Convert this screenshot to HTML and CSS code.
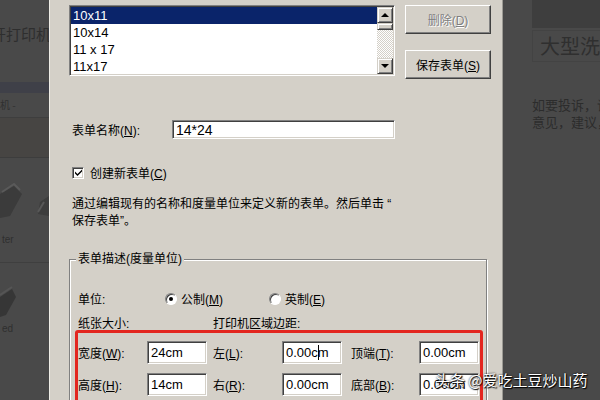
FILE: index.html
```html
<!DOCTYPE html>
<html lang="zh-CN">
<head>
<meta charset="utf-8">
<title>表单</title>
<link rel="stylesheet" href="styles.css">
</head>
<body>
<div class="screen">
  <aside class="bg-left">
    <div class="lt-title">开打印机</div>
    <div class="lt-band"></div>
    <div class="lt-row">机 -</div>
    <div class="lt-block"></div>
    <div class="lt-card">
      <svg class="lt-shape" width="49" height="60" viewBox="0 0 49 60">
        <path d="M0 22 L14 14 L22 22 L10 44 L0 46 Z" fill="#3b3b3b"/>
        <path d="M2 20 L14 12 L20 18" fill="none" stroke="#5a5a5a" stroke-width="2"/>
        <path d="M40 30 L49 24 L49 44 L38 42 Z" fill="#3d3d3d"/>
        <path d="M38 40 L44 30" stroke="#585858" stroke-width="2"/>
      </svg>
      <div class="lt-cap">ter</div>
    </div>
    <div class="lt-card2">
      <svg class="lt-shape" width="49" height="50" viewBox="0 0 49 50">
        <path d="M0 26 L12 18 L16 26 L6 44 L0 46 Z" fill="#363636"/>
        <path d="M0 24 L12 16" stroke="#555" stroke-width="2"/>
      </svg>
      <div class="lt-cap">ed</div>
    </div>
  </aside>

  <main class="dialog">
    <div class="top-row">
      <div class="listbox">
        <ul class="items">
          <li class="sel">10x11</li>
          <li>10x14</li>
          <li>11 x 17</li>
          <li>11x17</li>
        </ul>
        <div class="scrollbar">
          <div class="sb-btn"><span class="tri up"></span></div>
          <div class="sb-thumb"></div>
          <div class="sb-track"></div>
          <div class="sb-btn"><span class="tri down"></span></div>
        </div>
      </div>
      <div class="btn-col">
        <button class="btn" disabled>删除(<u>D</u>)</button>
        <button class="btn">保存表单(<u>S</u>)</button>
      </div>
    </div>

    <div class="name-row">
      <span class="name-label">表单名称(<u>N</u>):</span>
      <div class="field name-field">14*24</div>
    </div>

    <div class="check-row">
      <span class="checkbox">
        <svg width="9" height="9" viewBox="0 0 9 9"><path d="M1 3.5 L3.5 6 L8 1.5 L8 3.5 L3.5 8 L1 5.5 Z" fill="#000"/></svg>
      </span>
      <span>创建新表单(<u>C</u>)</span>
    </div>

    <p class="desc">通过编辑现有的名称和度量单位来定义新的表单。然后单击 “<br>保存表单”。</p>

    <fieldset class="group">
      <legend>表单描述(度量单位)</legend>
      <div class="unit-row">
        <span class="unit-label">单位:</span>
        <span class="radio-item"><span class="radio on"></span><span>公制(<u>M</u>)</span></span>
        <span class="radio-item"><span class="radio"></span><span>英制(<u>E</u>)</span></span>
      </div>
      <div class="head-row">
        <span>纸张大小:</span>
        <span>打印机区域边距:</span>
      </div>
      <div class="size-grid">
        <span class="lbl">宽度(<u>W</u>):</span>
        <div class="field small">24cm</div>
        <span class="lbl">左(<u>L</u>):</span>
        <div class="field small">0.00c<span class="caret"></span>m</div>
        <span class="lbl">顶端(<u>T</u>):</span>
        <div class="field small">0.00cm</div>

        <span class="lbl">高度(<u>H</u>):</span>
        <div class="field small">14cm</div>
        <span class="lbl">右(<u>R</u>):</span>
        <div class="field small">0.00cm</div>
        <span class="lbl">底部(<u>B</u>):</span>
        <div class="field small">0.00cm</div>
      </div>
    </fieldset>

    <div class="highlight"></div>
  </main>

  <aside class="bg-right">
    <div class="rt-top"></div>
    <div class="rt-title">大型洗</div>
    <div class="rt-text">如要投诉，请<br>意见，建议，</div>
  </aside>

  <div class="watermark">头条 @爱吃土豆炒山药</div>
</div>
</body>
</html>
```

FILE: styles.css
```css
* { box-sizing: border-box; }

body { margin: 0; }

.screen {
  position: relative;
  width: 600px;
  height: 400px;
  display: flex;
  overflow: hidden;
  font-family: "Liberation Sans", "Noto Sans CJK SC", sans-serif;
  font-size: 12px;
  color: #000;
}

/* ---------- left dimmed background ---------- */
.bg-left {
  width: 49px;
  flex-shrink: 0;
  background: #494949;
  display: flex;
  flex-direction: column;
  overflow: hidden;
}
.lt-title {
  height: 82px;
  padding-top: 25px;
  margin-left: -9px;
  font-family: "Noto Sans CJK SC", sans-serif;
  font-size: 15px;
  line-height: 18px;
  color: #2e2e2e;
  white-space: nowrap;
}
.lt-band { height: 11px; background: #3f4048; }
.lt-row {
  height: 25px;
  line-height: 24px;
  font-size: 10px;
  color: #303030;
  border-bottom: 1px solid #3e3e3e;
  white-space: nowrap;
  font-family: "Noto Sans CJK SC", sans-serif;
}
.lt-block {
  height: 40px;
  background: #474543;
  border-bottom: 1px solid #3d3d3d;
}
.lt-card {
  height: 105px;
  padding-top: 14px;
  border-bottom: 1px solid #3f3f3f;
}
.lt-card2 { flex: 1; padding-top: 8px; }
.lt-shape { display: block; }
.lt-cap {
  font-size: 10px;
  color: #2f2f2f;
  margin-top: 2px;
  padding-left: 2px;
}

/* ---------- dialog ---------- */
.dialog {
  position: relative;
  width: 454px;
  flex-shrink: 0;
  background: #d4d0c8;
  padding: 5px 0 0 20px;
  box-shadow: inset 1px 0 #eeece6, inset -1px 0 #9c9a94;
}

.top-row {
  display: flex;
  gap: 10px;
  height: 74px;
}

.listbox {
  width: 326px;
  height: 71px;
  display: flex;
  background: #fff;
  border: 1px solid;
  border-color: #808080 #fff #fff #808080;
  box-shadow: inset 1px 1px #404040, inset -1px -1px #d4d0c8;
  padding: 1px;
  overflow: hidden;
}
.items {
  flex: 1;
  list-style: none;
  margin: 0;
  padding: 0;
  font-size: 13px;
}
.items li {
  height: 17px;
  line-height: 17px;
  padding-left: 2px;
}
.items li.sel { background: #0a246a; color: #fff; }

.scrollbar {
  width: 16px;
  display: flex;
  flex-direction: column;
}
.sb-btn, .sb-thumb {
  background: #d4d0c8;
  border: 1px solid;
  border-color: #d4d0c8 #404040 #404040 #d4d0c8;
  box-shadow: inset 1px 1px #fff, inset -1px -1px #808080;
}
.sb-btn {
  height: 16px;
  display: flex;
  align-items: center;
  justify-content: center;
}
.sb-thumb { height: 7px; }
.sb-track {
  flex: 1;
  background-color: #fff;
  background-image: repeating-conic-gradient(#d4d0c8 0 25%, #fff 0 50%);
  background-size: 2px 2px;
}
.tri { width: 0; height: 0; border-left: 4px solid transparent; border-right: 4px solid transparent; }
.tri.up { border-bottom: 4px solid #000; }
.tri.down { border-top: 4px solid #000; }

.btn-col {
  display: flex;
  flex-direction: column;
  gap: 16px;
}
.btn {
  width: 86px;
  height: 29px;
  padding: 0;
  background: #d4d0c8;
  font-family: inherit;
  font-size: 12px;
  color: #000;
  border: 1px solid;
  border-color: #fff #404040 #404040 #fff;
  box-shadow: inset -1px -1px #808080;
}
.btn:disabled { color: #808080; text-shadow: 1px 1px 0 #fff; }

.name-row {
  display: flex;
  align-items: center;
  margin-top: 41px;
  padding-left: 3px;
}
.name-label { width: 100px; }

.field {
  background: #fff;
  border: 1px solid;
  border-color: #808080 #fff #fff #808080;
  box-shadow: inset 1px 1px #404040, inset -1px -1px #d4d0c8;
  padding-left: 3px;
  font-size: 13px;
  display: flex;
  align-items: center;
  white-space: nowrap;
}
.name-field { width: 223px; height: 19px; font-size: 14px; }

.check-row {
  display: flex;
  align-items: center;
  gap: 6px;
  margin-top: 27px;
  padding-left: 3px;
  height: 13px;
}
.checkbox {
  width: 12px;
  height: 12px;
  background: #fff;
  border: 1px solid;
  border-color: #808080 #fff #fff #808080;
  box-shadow: inset 1px 1px #404040, inset -1px -1px #d4d0c8;
  display: flex;
  align-items: center;
  justify-content: center;
}
.checkbox svg { display: block; }

.desc {
  margin: 17px 0 0;
  padding-left: 3px;
  line-height: 17px;
}

.group {
  margin: 21px 0 0;
  width: 418px;
  height: 200px;
  padding: 0 0 0 8px;
  border: 1px solid #808080;
  box-shadow: inset 1px 1px #fff, 1px 1px #fff;
}
.group legend {
  padding: 0 2px;
  margin-left: -2px;
  line-height: 17px;
  background: #d4d0c8;
}

.unit-row {
  display: flex;
  align-items: center;
  margin-top: 22px;
  height: 17px;
}
.unit-label { width: 87px; }
.radio-item {
  width: 104px;
  display: flex;
  align-items: center;
  gap: 4px;
}
.radio {
  width: 12px;
  height: 12px;
  border-radius: 50%;
  background: #fff;
  border: 1px solid;
  border-color: #808080 #fff #fff #808080;
  box-shadow: inset 1px 1px #404040;
  display: flex;
  align-items: center;
  justify-content: center;
}
.radio.on::after {
  content: "";
  width: 4px;
  height: 4px;
  border-radius: 50%;
  background: #000;
}

.head-row {
  display: grid;
  grid-template-columns: 135px auto;
  margin-top: 9px;
  height: 17px;
  line-height: 17px;
}

.size-grid {
  display: grid;
  grid-template-columns: 69px 66px 69px 69px 68px 60px;
  grid-auto-rows: 23px;
  row-gap: 9px;
  align-items: center;
  margin-top: 8px;
}
.field.small { width: 60px; height: 23px; }
.caret {
  display: inline-block;
  width: 1px;
  height: 15px;
  background: #000;
  margin: 0 -1px 0 0;
}

.highlight {
  position: absolute;
  left: 26px;
  top: 330px;
  width: 408px;
  height: 100px;
  border: 3px solid #e3261f;
  border-radius: 3px;
}

/* ---------- right dimmed background ---------- */
.bg-right {
  flex: 1;
  background: #494949;
  padding-left: 29px;
  white-space: nowrap;
  overflow: hidden;
}
.rt-top { height: 28px; background: #3e3e3e; }
.rt-title {
  margin-top: 2px;
  height: 32px;
  border: 1px solid #434343;
  border-right: 0;
  padding-left: 7px;
  font-family: "Noto Sans CJK SC", sans-serif;
  font-size: 20px;
  line-height: 30px;
  color: #2f2f2f;
}
.rt-text {
  margin-top: 34px;
  font-family: "Noto Sans CJK SC", sans-serif;
  font-size: 13px;
  line-height: 17px;
  color: #2c2c2c;
}

.watermark {
  position: absolute;
  left: 435px;
  top: 370px;
  font-family: "Noto Sans CJK SC", sans-serif;
  font-size: 15px;
  line-height: 20px;
  color: #fff;
  white-space: nowrap;
  text-shadow: 0 0 2px #000, 1px 1px 1px #000;
}
```
